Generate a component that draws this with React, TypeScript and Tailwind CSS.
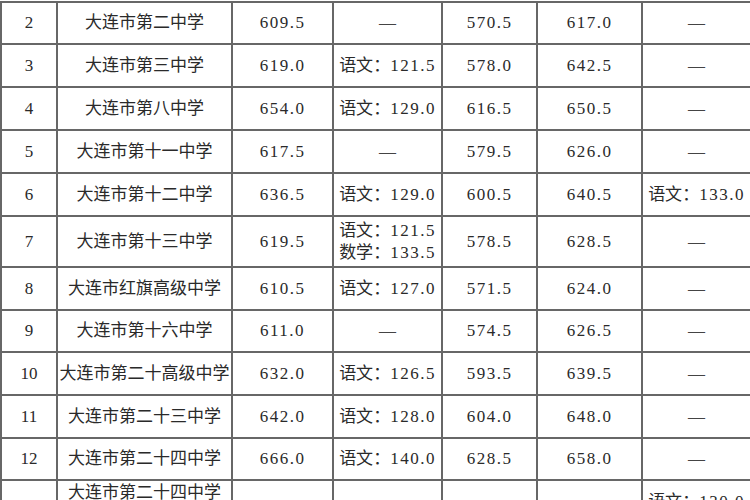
import type { ReactNode } from "react";

// ── Data ────────────────────────────────────────────────────────────────────

type Row = {
  no: string;
  school: ReactNode;
  score: string;
  single: string[];
  low: string;
  high: string;
  extra: string[];
  h: string;
};

const DASH = "—";

const rows: Row[] = [
  { no: "2", school: "大连市第二中学", score: "609.5", single: [DASH], low: "570.5", high: "617.0", extra: [DASH], h: "h-[42px]" },
  { no: "3", school: "大连市第三中学", score: "619.0", single: ["语文：121.5"], low: "578.0", high: "642.5", extra: [DASH], h: "h-[43px]" },
  { no: "4", school: "大连市第八中学", score: "654.0", single: ["语文：129.0"], low: "616.5", high: "650.5", extra: [DASH], h: "h-[43px]" },
  { no: "5", school: "大连市第十一中学", score: "617.5", single: [DASH], low: "579.5", high: "626.0", extra: [DASH], h: "h-[43px]" },
  { no: "6", school: "大连市第十二中学", score: "636.5", single: ["语文：129.0"], low: "600.5", high: "640.5", extra: ["语文：133.0"], h: "h-[43px]" },
  { no: "7", school: "大连市第十三中学", score: "619.5", single: ["语文：121.5", "数学：133.5"], low: "578.5", high: "628.5", extra: [DASH], h: "h-[51px]" },
  { no: "8", school: "大连市红旗高级中学", score: "610.5", single: ["语文：127.0"], low: "571.5", high: "624.0", extra: [DASH], h: "h-[43px]" },
  { no: "9", school: "大连市第十六中学", score: "611.0", single: [DASH], low: "574.5", high: "626.5", extra: [DASH], h: "h-[42px]" },
  { no: "10", school: "大连市第二十高级中学", score: "632.0", single: ["语文：126.5"], low: "593.5", high: "639.5", extra: [DASH], h: "h-[43px]" },
  { no: "11", school: "大连市第二十三中学", score: "642.0", single: ["语文：128.0"], low: "604.0", high: "648.0", extra: [DASH], h: "h-[43px]" },
  { no: "12", school: "大连市第二十四中学", score: "666.0", single: ["语文：140.0"], low: "628.5", high: "658.0", extra: [DASH], h: "h-[42px]" },
  {
    no: "13",
    school: (
      <>
        大连市第二十四中学
        <br />
        （中外合作办学
        <br />
        项目）
      </>
    ),
    score: "640.0",
    single: [DASH],
    low: "600.0",
    high: "648.5",
    extra: ["语文：130.0", "数学：135.0"],
    h: "h-[66px]",
  },
];

// ── Cells ───────────────────────────────────────────────────────────────────

const cellBase =
  "flex flex-col items-center justify-center border-r-2 border-b-2 border-[#676767] bg-white text-[17px] text-[#2a2a2a] leading-[22px]";

function Num({ v }: { v: string }) {
  return <span className="tracking-[1.5px]">{v}</span>;
}

function Mixed({ v }: { v: string }) {
  if (v === DASH) return <span className="text-[#444]">—</span>;
  const [label, num] = v.split("：");
  return (
    <span className="whitespace-nowrap">
      {label}：<span className="tracking-[1.5px]">{num}</span>
    </span>
  );
}

// ── Page ────────────────────────────────────────────────────────────────────

export default function App() {
  return (
    <div
      className="relative w-[750px] h-[500px] overflow-hidden bg-white"
      style={{ fontFamily: "'Liberation Serif', 'Noto Sans CJK SC', serif" }}
    >
      <div className="mt-px grid w-[752px] grid-cols-[58px_175px_101px_109px_95px_105px_109px] border-t-2 border-[#676767]">
        {rows.map((r) => (
          <div key={r.no} className="contents">
            <div className={`${cellBase} ${r.h} border-l-2`}>
              <span>{r.no}</span>
            </div>
            <div className={`${cellBase} ${r.h}`}>
              <span className="whitespace-nowrap leading-[20px] text-center">{r.school}</span>
            </div>
            <div className={`${cellBase} ${r.h}`}>
              <Num v={r.score} />
            </div>
            <div className={`${cellBase} ${r.h}`}>
              {r.single.map((s) => (
                <Mixed key={s} v={s} />
              ))}
            </div>
            <div className={`${cellBase} ${r.h}`}>
              <Num v={r.low} />
            </div>
            <div className={`${cellBase} ${r.h}`}>
              <Num v={r.high} />
            </div>
            <div className={`${cellBase} ${r.h}`}>
              {r.extra.map((s) => (
                <Mixed key={s} v={s} />
              ))}
            </div>
          </div>
        ))}
      </div>
    </div>
  );
}
